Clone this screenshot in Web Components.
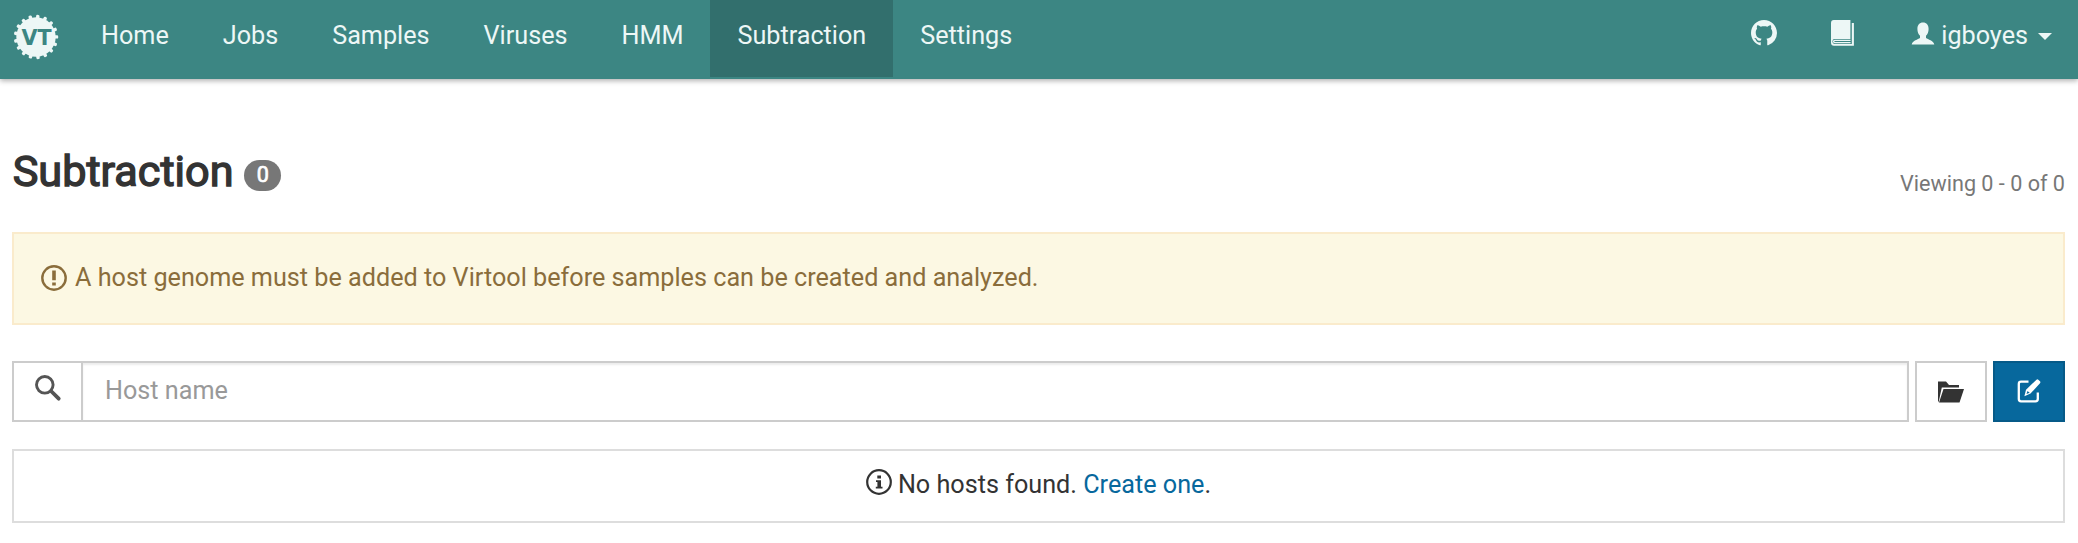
<!DOCTYPE html>
<html lang="en">
<head>
<meta charset="utf-8">
<title>Virtool</title>
<style>
html,body{margin:0;background:#fff}
body{font:25.2px/36px Roboto,sans-serif;color:#333;height:543px;overflow:hidden}
</style>
</head>
<body>
<vt-app></vt-app>
<script>
const ICONS = {
  github:'<svg viewBox="0 0 16 16"><path fill="currentColor" d="M8 0C3.58 0 0 3.58 0 8c0 3.54 2.29 6.53 5.47 7.59.4.07.55-.17.55-.38 0-.19-.01-.82-.01-1.49-2.01.37-2.53-.49-2.69-.94-.09-.23-.48-.94-.82-1.13-.28-.15-.68-.52-.01-.53.63-.01 1.08.58 1.23.82.72 1.21 1.87.87 2.33.66.07-.52.28-.87.51-1.07-1.78-.2-3.64-.89-3.64-3.95 0-.87.31-1.59.82-2.15-.08-.2-.36-1.02.08-2.12 0 0 .67-.21 2.2.82.64-.18 1.32-.27 2-.27s1.36.09 2 .27c1.53-1.04 2.2-.82 2.2-.82.44 1.1.16 1.92.08 2.12.51.56.82 1.27.82 2.15 0 3.07-1.87 3.75-3.65 3.95.29.25.54.73.54 1.48 0 1.07-.01 1.93-.01 2.2 0 .21.15.46.55.38A8.01 8.01 0 0 0 16 8c0-4.42-3.58-8-8-8z"/></svg>',
  book:'<svg viewBox="0 0 26 26"><path fill="currentColor" d="M3.8 0H20.4V19H4.6Q2.4 19 2.4 21.4T4.6 24H21.8V3H23.9V25.8H4Q1 25.8 1 22.6V3Q1 0 3.8 0Z"/><path fill="none" stroke="currentColor" stroke-width="1.3" d="M20.6 20.4H4.8Q3.6 20.4 3.6 21.5T4.8 22.6H20.6"/></svg>',
  user:'<svg viewBox="0 0 26 26"><path fill="currentColor" d="M13 1.5C16.6 1.5 18.6 4 18.6 8C18.6 11 17.6 13.3 16 14.7V17C18 18.6 23.4 19.4 24.3 23.5H1.7C2.6 19.4 8 18.6 10 17V14.7C8.4 13.3 7.4 11 7.4 8C7.4 4 9.4 1.5 13 1.5Z"/></svg>',
  warn:'<svg viewBox="0 0 26 26"><circle cx="13" cy="13" r="11.7" fill="none" stroke="currentColor" stroke-width="2.4"/><path fill="currentColor" d="M11.2 5.5H14.8V15.2H11.2zM11.2 17.4H14.8V20.6H11.2z"/></svg>',
  info:'<svg viewBox="0 0 26 26"><circle cx="13" cy="13" r="11.8" fill="none" stroke="currentColor" stroke-width="2.2"/><path fill="currentColor" d="M11.3 6.4H15V9.4H11.3zM10 11.2H15V17.8H16.5V19.6H9.8V17.8H11.4V13H10z"/></svg>',
  search:'<svg viewBox="0 0 26 26"><circle cx="9.8" cy="9.8" r="8.3" fill="none" stroke="currentColor" stroke-width="2.9"/><path d="M16 16L23.7 23.7" stroke="currentColor" stroke-width="3.8" stroke-linecap="round"/></svg>',
  folder:'<svg viewBox="0 0 26 22"><path fill="currentColor" d="M0 .5H8L11 4H21V6.5H3.8L1 19.5L0 21.5zM5.5 8H26L21.5 21.5H1z"/></svg>',
  edit:'<svg viewBox="0 0 24 24"><path fill="none" stroke="currentColor" stroke-width="2.3" d="M11.5 2.7H4Q1.8 2.7 1.8 5V20Q1.8 22.3 4 22.3H18.5Q20.8 22.3 20.8 20V13.5"/><path fill="currentColor" fill-rule="evenodd" d="M19.5 .7Q20.4 0 21.3 .8L23 2.3Q23.8 3.2 23 4.2L13.5 14.6L7.4 17.2L9 10.8zM10.5 12L9.5 15L12.7 13.8z"/></svg>'
};
function define(name, css, html, setup){
  const t = document.createElement('template');
  t.innerHTML = '<style>*{box-sizing:border-box}' + css + '</style>' + html;
  customElements.define(name, class extends HTMLElement{
    constructor(){
      super();
      this.attachShadow({mode:'open'}).append(t.content.cloneNode(true));
    }
    connectedCallback(){ if(setup) setup(this, this.shadowRoot); }
  });
}
define('vt-icon', ':host{display:inline-block;width:26px;height:26px;flex:none}span{display:block}svg{display:block;width:100%;height:auto;overflow:visible}', '<span></span>',
  (el,r)=>{ r.querySelector('span').innerHTML = ICONS[el.getAttribute('name')]; });

define('vt-logo', ':host{display:block;width:46px;height:46px}svg{display:block}text{font:bold 21px "DejaVu Sans",sans-serif;fill:#3c8683}',
  '<svg width="46" height="46" viewBox="-23 -23 46 46"><circle r="19.7" fill="#edf7f6"/><g class="teeth" fill="#edf7f6"></g><text x="0.6" y="8.3" text-anchor="middle" textLength="30" lengthAdjust="spacingAndGlyphs">VT</text></svg>',
  (el,r)=>{
    let s='';
    for(let i=0;i<17;i++) s+='<rect x="-1.7" y="-22.2" width="3.4" height="5" rx="1.2" transform="rotate('+(5+i*360/17)+')"/>';
    r.querySelector('.teeth').innerHTML=s;
  });

define('vt-nav-item', ':host{display:flex;padding:0 27px;height:77px;line-height:72px;white-space:nowrap;color:#edf7f6}:host([active]){background:#326f6d}', '<slot></slot>');

define('vt-navbar', `:host{display:flex;height:79px;background:#3c8683;box-shadow:0 2px 5px rgba(0,0,0,.3);position:relative}
.brand{width:74px;padding:14px 0 0 13px}.right{display:flex;margin-left:auto}
.ic{padding-top:20px}.gh{margin:0 -1px 0 1px}.user{padding-top:21px;margin-right:5px}
.caret{border:7.4px solid transparent;border-top-color:#edf7f6;border-bottom:0;width:0;height:0;margin:33px -1px 0 10px}`,
`<div class="brand"><vt-logo></vt-logo></div>
<vt-nav-item>Home</vt-nav-item><vt-nav-item>Jobs</vt-nav-item><vt-nav-item>Samples</vt-nav-item><vt-nav-item>Viruses</vt-nav-item><vt-nav-item>HMM</vt-nav-item><vt-nav-item active>Subtraction</vt-nav-item><vt-nav-item>Settings</vt-nav-item>
<div class="right"><vt-nav-item><vt-icon class="ic gh" name="github"></vt-icon></vt-nav-item><vt-nav-item><vt-icon class="ic" name="book"></vt-icon></vt-nav-item>
<vt-nav-item><vt-icon class="user" name="user"></vt-icon>igboyes<span class="caret"></span></vt-nav-item></div>`);

define('vt-header', `:host{display:flex;justify-content:space-between;height:153px;padding-top:69px}
h3{margin:0;font-size:43.2px;line-height:48px;font-weight:400;-webkit-text-stroke:1.4px #333;display:flex;padding-left:.7px}
.badge{margin:12px 0 0 10.3px;width:37px;height:31px;border-radius:18px;background:#777;color:#fff;font-size:21.6px;line-height:29px;text-align:center;-webkit-text-stroke:.7px #fff;padding-left:1px}
small{font-size:21.6px;color:#777;line-height:30px;padding-top:21px}`,
`<h3>Subtraction<span class="badge">0</span></h3><small>Viewing 0 - 0 of 0</small>`);

define('vt-alert', `:host{display:flex;height:93px;border:2px solid #faebcc;background:#fcf8e3;color:#8a6d3b;padding:26px 27px 0;line-height:36px}
vt-icon{margin:5px 8px 0 0}`, '<vt-icon name="warn"></vt-icon><slot></slot>');

define('vt-search', `:host{display:flex;height:61px;margin-top:36px}
.addon{width:71px;border:2px solid #ccc;border-right:0;padding:12px 0 0 21px;color:#555}
.input{flex:1;border:2px solid #ccc;color:#999;padding:0 22px;line-height:55px;box-shadow:inset 0 2px 2px rgba(0,0,0,.075);margin-left:-2px}
.btn{width:72px;border:2px solid #ccc;margin-left:6px;padding:18px 0 0 21px}
.primary{background:#07689d;border-color:#065a88;color:#fff;padding:16px 0 0 22px}.primary vt-icon{width:24px}`,
`<div class="addon"><vt-icon name="search"></vt-icon></div><div class="input">Host name</div>
<div class="btn"><vt-icon name="folder"></vt-icon></div><div class="btn primary"><vt-icon name="edit"></vt-icon></div>`);

define('vt-empty', `:host{display:flex;justify-content:center;height:74px;border:2px solid #ddd;margin-top:27px;line-height:68px}
vt-icon{margin:18px 6px 0 0}a{color:#07689d;text-decoration:none}`,
`<vt-icon name="info"></vt-icon><span>No hosts found. <a>Create one</a>.</span>`);

define('vt-app', ':host{display:block}main{padding:0 13px 0 12px}',
`<vt-navbar></vt-navbar><main><vt-header></vt-header><vt-alert>A host genome must be added to Virtool before samples can be created and analyzed.</vt-alert><vt-search></vt-search><vt-empty></vt-empty></main>`);
</script>
</body>
</html>
